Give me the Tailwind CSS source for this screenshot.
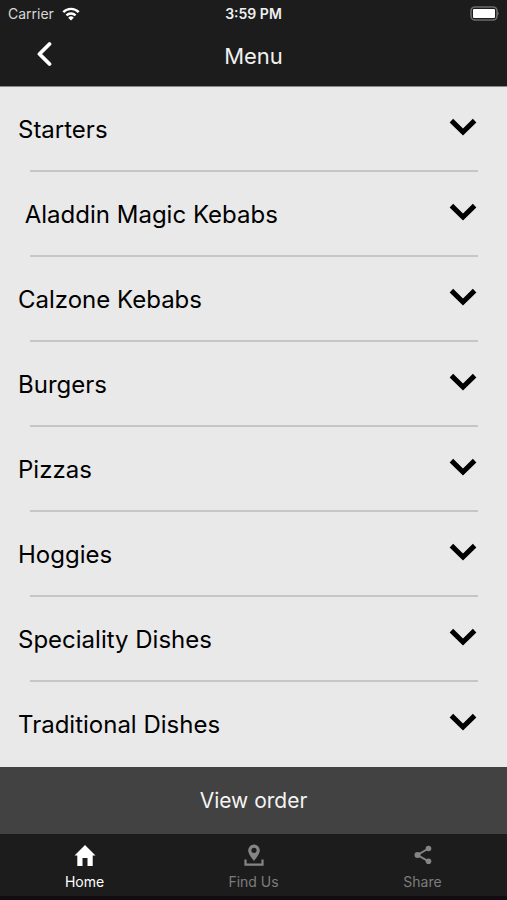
<!DOCTYPE html>
<html lang="en">
  <head>
    <meta charset="UTF-8" />
    <title>Menu</title>
    <meta name="viewport" content="width=device-width, initial-scale=1.0" />
    <script src="https://cdn.jsdelivr.net/npm/@tailwindcss/browser@4"></script>
  </head>
  <body class="min-h-screen flex flex-col bg-[#e9e9e9] font-['Inter',sans-serif] text-black">
    <header class="bg-[#1c1c1c] text-white border-b border-[#8a8a8a]">
      <!-- status bar -->
      <div class="grid grid-cols-3 items-center h-7 px-2 text-sm">
        <div class="flex items-center gap-2 text-[#d8d8d8]">
          <span>Carrier</span>
          <svg class="w-[18px] h-3.5" viewBox="0 0 20 16" fill="none" stroke="#fff" stroke-width="2.8">
            <path d="M1.2 5.8a12.4 12.4 0 0 1 17.6 0" />
            <path d="M4.8 9.6a7.4 7.4 0 0 1 10.4 0" />
            <path d="M10 15.5l-3.2-3.3a4.5 4.5 0 0 1 6.4 0z" fill="#fff" stroke="none" />
          </svg>
        </div>
        <span class="text-center font-semibold text-[#f0f0f0]">3:59 PM</span>
        <svg class="justify-self-end w-[30px] h-4" viewBox="0 0 30 16">
          <rect x="2" y="1" width="26" height="13" rx="4" fill="#1c1c1c" stroke="#6c6c6c" stroke-width="1.6" />
          <rect x="4" y="3" width="22" height="9" rx="1" fill="#fff" />
          <path d="M28 5l2 2.500-2 2.500z" fill="#6c6c6c" />
        </svg>
      </div>

      <!-- title bar -->
      <div class="grid grid-cols-3 items-center h-[58px] pb-0.5">
        <button type="button" aria-label="Back" class="justify-self-start ml-8 p-1 pb-2">
          <svg class="w-4 h-7" viewBox="0 0 16 28" fill="none" stroke="#fff" stroke-width="3.8" stroke-linecap="round" stroke-linejoin="round">
            <path d="M13.5 4L3.5 14l10 10" />
          </svg>
        </button>
        <h1 class="text-center text-[22px] text-[#f0f0f0]">Menu</h1>
      </div>
    </header>

    <main class="flex-1">
      <ul id="menuList"></ul>
    </main>

    <footer class="text-white">
      <button type="button" class="block w-full h-[67px] bg-[#424242] text-[21px] text-[#f4f4f4]">View order</button>
      <nav class="grid grid-cols-3 h-[66px] pt-2 bg-[#1c1c1c] border-b-4 border-[#120c10] text-sm text-[#7c7c7c]">
        <a href="#home" class="flex flex-col items-center gap-1.5 text-white">
          <svg class="w-6 h-6" viewBox="0 0 24 24" fill="#fff">
            <path d="M12 3L1.5 13.5h2.8V24h5.2v-8h5v8h5.200V13.5h2.8z" />
          </svg>
          <span>Home</span>
        </a>
        <a href="#find" class="flex flex-col items-center gap-1.5">
          <svg class="w-6 h-6" viewBox="0 0 24 24">
            <path fill="#858585" fill-rule="evenodd" d="M12 2.5a5.8 5.8 0 0 0-5.8 5.8c0 3.7 3.500 7.5 5.8 10.7 2.3-3.2 5.8-7 5.8-10.700A5.8 5.8 0 0 0 12 2.5zm0 3.200a2.6 2.6 0 1 1 0 5.2 2.6 2.6 0 0 1 0-5.2z" />
            <path fill="none" stroke="#858585" stroke-width="2.2" d="M3.5 17.500v5.100h17v-5.100" />
          </svg>
          <span>Find Us</span>
        </a>
        <a href="#share" class="flex flex-col items-center gap-1.5">
          <svg class="w-6 h-6" viewBox="0 0 24 24" fill="#858585">
            <path d="M17.500 6.500L6.500 13l11 6.300" fill="none" stroke="#858585" stroke-width="2" />
            <circle cx="17.5" cy="6.5" r="2.800" />
            <circle cx="6.5" cy="13" r="3" />
            <circle cx="17.5" cy="19.3" r="2.800" />
          </svg>
          <span>Share</span>
        </a>
      </nav>
    </footer>

    <script>
      const menuList = document.getElementById('menuList');
      // names are printed exactly as stored, spaces included
      const categories = [
        'Starters',
        ' Aladdin Magic Kebabs',
        'Calzone Kebabs',
        'Burgers',
        'Pizzas',
        'Hoggies',
        'Speciality Dishes',
        'Traditional Dishes'
      ];

      menuList.innerHTML = categories.map(name => `
        <li class="group">
          <button type="button" class="flex items-center justify-between w-full h-[83px] pl-[18px] pr-[30px] text-left text-2xl">
            <span class="whitespace-pre pt-0.5">${name}</span>
            <svg class="w-7 h-5 mb-1" viewBox="0 0 28 20" fill="none" stroke="#000" stroke-width="5">
              <path d="M2.4 3.6L14 15l11.6-11.400" />
            </svg>
          </button>
          <div class="h-[2px] ml-[30px] mr-[29px] bg-[#c6c6c6] group-last:hidden"></div>
        </li>`).join('');
    </script>
  </body>
</html>
